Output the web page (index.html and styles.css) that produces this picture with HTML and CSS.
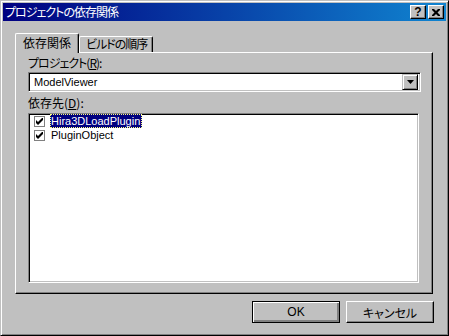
FILE: index.html
```html
<!DOCTYPE html>
<html lang="ja">
<head>
    <meta charset="UTF-8">
    <title>プロジェクトの依存関係</title>
    <link rel="stylesheet" href="styles.css">
</head>
<body>
    <div class="window">
        <div class="titlebar">
            <span class="title">プロジェクトの依存関係</span>
            <div class="caption-buttons">
                <div class="cap-btn help">?</div>
                <div class="cap-btn">
                    <svg width="8" height="7" viewBox="0 0 8 7">
                        <path d="M0 0h2l2 2 2-2h2v1l-2.5 2.5L8 6v1H6L4 5 2 7H0V6l2.5-2.5L0 1z" fill="#000"/>
                    </svg>
                </div>
            </div>
        </div>

        <div class="client">
            <div class="tabs">
                <div class="tab active">依存関係</div>
                <div class="tab kana">ビルドの順序</div>
            </div>

            <div class="panel">
                <div class="field-label kana">プロジェクト(<u>R</u>):</div>
                <div class="combo">
                    <span class="combo-text latin">ModelViewer</span>
                    <div class="drop-btn">
                        <svg width="7" height="4" viewBox="0 0 7 4">
                            <path d="M0 0h7L3.5 4z" fill="#000"/>
                        </svg>
                    </div>
                </div>

                <div class="field-label second">依存先(<u>D</u>):</div>
                <div class="listbox">
                    <div class="list-item">
                        <span class="check">
                            <svg width="7" height="7" viewBox="0 0 7 7">
                                <path d="M0 2v3l2 2 5-5V-1L2 4z" fill="#000"/>
                            </svg>
                        </span>
                        <span class="item-name latin selected">Hira3DLoadPlugin</span>
                    </div>
                    <div class="list-item">
                        <span class="check">
                            <svg width="7" height="7" viewBox="0 0 7 7">
                                <path d="M0 2v3l2 2 5-5V-1L2 4z" fill="#000"/>
                            </svg>
                        </span>
                        <span class="item-name latin">PluginObject</span>
                    </div>
                </div>
            </div>

            <div class="buttons">
                <button class="btn latin default">OK</button>
                <button class="btn">キャンセル</button>
            </div>
        </div>
    </div>
</body>
</html>
```

FILE: styles.css
```css
* {
    box-sizing: border-box;
}
body {
    margin: 0;
    background-color: #c0c0c0;
    font-family: "Noto Sans CJK JP", sans-serif;
    font-size: 12px;
    font-feature-settings: "palt";
    color: #000;
}
.latin {
    font-family: "Liberation Sans", "Noto Sans CJK JP", sans-serif;
    font-size: 11px;
}
.kana {
    letter-spacing: -1px;
}
.window {
    width: 449px;
    height: 336px;
    display: flex;
    flex-direction: column;
    background-color: #c0c0c0;
    border: 1px solid;
    border-color: #c0c0c0 #000 #000 #c0c0c0;
    box-shadow: inset 1px 1px #fff, inset -1px -1px #808080;
    padding: 2px;
}
.titlebar {
    height: 18px;
    display: flex;
    align-items: center;
    justify-content: space-between;
    padding: 0 2px;
    background: linear-gradient(to right, #000080, #1084d0);
    color: #fff;
}
.title {
    line-height: 18px;
    letter-spacing: -1px;
}
.caption-buttons {
    display: flex;
    gap: 2px;
}
.cap-btn {
    width: 16px;
    height: 14px;
    display: flex;
    justify-content: center;
    align-items: center;
    background-color: #c0c0c0;
    border: 1px solid;
    border-color: #fff #000 #000 #fff;
    box-shadow: inset -1px -1px #808080;
    color: #000;
}
.help {
    font-family: "Liberation Sans", sans-serif;
    font-weight: bold;
    font-size: 12px;
    line-height: 12px;
}
.client {
    flex: 1;
    display: flex;
    flex-direction: column;
    padding: 12px 12px 0 12px;
}
.tabs {
    height: 19px;
    display: flex;
    align-items: flex-end;
}
.tab {
    height: 16px;
    line-height: 14px;
    padding: 0 5px 0 6px;
    border: 1px solid;
    border-bottom: none;
    border-color: #fff #000 #000 #fff;
    border-radius: 2px 2px 0 0;
    box-shadow: inset -1px 0 #808080;
    background-color: #c0c0c0;
}
.tab.active {
    position: relative;
    z-index: 1;
    height: 20px;
    margin-bottom: -1px;
    padding: 2px 7px 0 7px;
}
.panel {
    height: 242px;
    margin-right: 1px;
    display: flex;
    flex-direction: column;
    padding: 3px 11px 10px 12px;
    border: 1px solid;
    border-color: #fff #000 #000 #fff;
    box-shadow: inset -1px -1px #808080;
}
.field-label {
    height: 14px;
    line-height: 14px;
    margin-bottom: 2px;
}
.field-label.second {
    margin-top: 4px;
    margin-bottom: 3px;
}
.combo {
    height: 20px;
    display: flex;
    align-items: center;
    justify-content: space-between;
    padding: 2px;
    background-color: #fff;
    border: 1px solid;
    border-color: #808080 #fff #fff #808080;
    box-shadow: inset 1px 1px #000, inset -1px -1px #c0c0c0;
}
.combo-text {
    padding-left: 3px;
    line-height: 16px;
}
.drop-btn {
    width: 16px;
    height: 16px;
    display: flex;
    justify-content: center;
    align-items: center;
    background-color: #c0c0c0;
    border: 1px solid;
    border-color: #c0c0c0 #000 #000 #c0c0c0;
    box-shadow: inset 1px 1px #fff, inset -1px -1px #808080;
}
.listbox {
    height: 170px;
    margin-right: 2px;
    padding: 0 2px;
    background-color: #fff;
    border: 1px solid;
    border-color: #808080 #fff #fff #808080;
    box-shadow: inset 1px 1px #000, inset -1px -1px #c0c0c0;
}
.list-item {
    height: 14px;
    display: flex;
    align-items: center;
}
.check {
    width: 11px;
    height: 11px;
    margin: 0 5px 0 3px;
    display: flex;
    justify-content: center;
    align-items: center;
    background-color: #fff;
    border: 1px solid #808080;
}
.item-name {
    height: 14px;
    line-height: 14px;
    padding: 0 2px 0 1px;
}
.item-name.selected {
    background-color: #000080;
    color: #fff;
    outline: 1px dotted #ffff80;
    outline-offset: -1px;
}
.buttons {
    display: flex;
    justify-content: flex-end;
    gap: 6px;
    margin-top: 7px;
}
.btn {
    width: 88px;
    height: 22px;
    padding: 0;
    font-family: "Noto Sans CJK JP", sans-serif;
    font-size: 12px;
    font-feature-settings: "palt";
    color: #000;
    background-color: #c0c0c0;
    border: 1px solid;
    border-color: #fff #000 #000 #fff;
    box-shadow: inset -1px -1px #808080;
}
.btn.latin {
    font-family: "Liberation Sans", sans-serif;
    font-size: 12px;
}
.btn.default {
    border: 1px solid #000;
    box-shadow: inset 1px 1px #fff, inset -2px -2px #808080, inset -1px -1px #000;
}
```
